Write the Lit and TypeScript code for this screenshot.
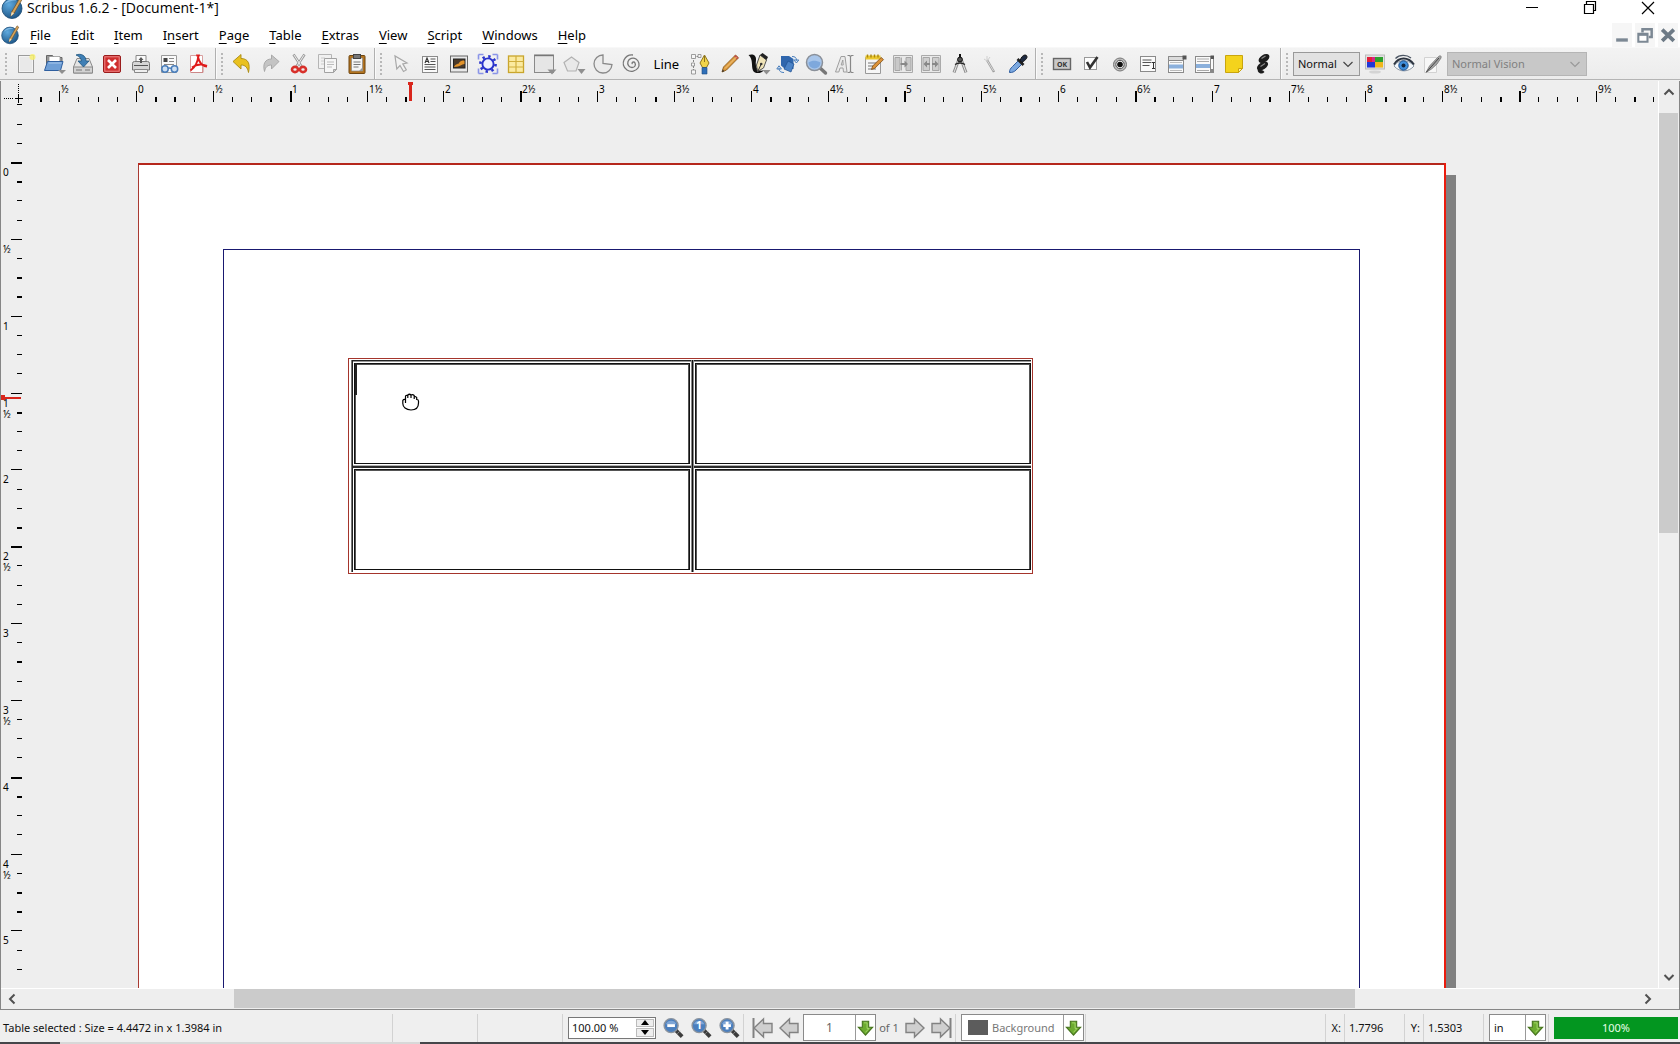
import { LitElement, html, svg, css, nothing, SVGTemplateResult, TemplateResult } from "lit";
import { customElement } from "lit/decorators.js";

const DROP = svg`<path d="M15 18h8l-4 4z" fill="#8f8f8f"/>`;

const ICONS: Record<string, SVGTemplateResult> = {
  logo: svg`<circle cx="12" cy="12.500" r="10" fill="url(#g-logo)" stroke="#16466f" stroke-width=".8"/>
    <path d="M4.500 8c3-5 9-6 12-3.500-4-.5-8 1-12 3.500z" fill="#8fc3ea" opacity=".8"/>
    <path d="M20.500 1l2 1.600L14 17.500l-3.200 2.800.8-4.200z" fill="#d6a45c" stroke="#6b4a20" stroke-width=".7"/>
    <path d="M11.600 16.100l2.400 1.400-3.200 2.800z" fill="#f3e3c0"/>`,
  new: svg`<rect x="4.500" y="3.500" width="15" height="17" fill="#f3f3f3" stroke="#9b9b9b"/>
    <rect x="6" y="5" width="12" height="14" fill="#e9e9e9"/><circle cx="18.500" cy="5" r="3" fill="#f6ef6e" opacity=".85"/>`,
  open: svg`<path d="M3.500 18V3.500h6l1.500 2h8V9" fill="#9a9a9a" stroke="#666"/><path d="M6 4.500h11v6H6z" fill="#fff" stroke="#888" stroke-width=".7"/>
    <path d="M1.500 18.500L4.500 9.500h15.500l-2.500 9z" fill="#6f9fd6" stroke="#2f5f9f"/><path d="M5.500 11h13" stroke="#a9c8ec"/>${DROP}`,
  save: svg`<path d="M2.500 15L6 6.500h12l3.500 8.500v6h-19z" fill="#e4e4e4" stroke="#8a8a8a"/><path d="M2.500 15h19v6h-19z" fill="#d2d2d2" stroke="#8a8a8a"/>
    <path d="M14 18h5M5 18h6" stroke="#777"/><path d="M5 3c5-2 10 .5 10 6h3l-5.500 6L7 9h3.500C10 6 8 4 5 3z" fill="#3f7fb5" stroke="#1f567f" stroke-width=".8"/>`,
  close: svg`<rect x="3.500" y="3.500" width="17" height="17" rx="1.500" fill="#cf2f2f" stroke="#9a1c1c"/><rect x="4.800" y="4.800" width="14.400" height="14.400" fill="none" stroke="#e88"/>
    <path d="M8 8l8 8M16 8l-8 8" stroke="#fff" stroke-width="2.600"/>`,
  print: svg`<path d="M7 3.500h10V12H7z" fill="#fafafa" stroke="#888"/><path d="M3.500 11.500q0-2 2-2h13q2 0 2 2V18h-17z" fill="#d6d6d6" stroke="#777"/>
    <path d="M12 5l2.500 3h-1.500v3h-2V8H9.500z" fill="#555"/><path d="M5 13.500h14" stroke="#555"/><path d="M5.500 17.500h13v3h-13z" fill="#efefef" stroke="#888"/>`,
  preflight: svg`<path d="M4.500 3.500h15v17h-15z" fill="#fafafa" stroke="#9a9a9a"/><path d="M6.500 6h4v4h-4z" fill="#444"/><path d="M12 6.500h5M12 9.500h5M7 12.500h10" stroke="#888"/>
    <circle cx="8" cy="17" r="3.200" fill="#cfe0f2" stroke="#4a7ebb" stroke-width="1.500"/><circle cx="17.500" cy="17" r="3.200" fill="#cfe0f2" stroke="#4a7ebb" stroke-width="1.500"/><path d="M11 16.500q1.700-1 3.300 0" fill="none" stroke="#4a7ebb" stroke-width="1.300"/>`,
  pdf: svg`<path d="M4.500 3.500h12v17h-12z" fill="#fff" stroke="#d9a0a0"/><path d="M10 2.500h4l-.5 2h-3z" fill="#d22"/>
    <path d="M12.500 3c-.5 6-3 12-8 15.500M12 5c1 5 4 9 9 9.500M6 15.500c4-3 9-4 15-1.500" fill="none" stroke="#e01b1b" stroke-width="2"/><path d="M5 20.500h12v-6" fill="none" stroke="#c88"/>`,
  undo: svg`<path d="M3 9.500L11 2.500v4c7 0 9.500 5 7.500 14-1-5-3-7.500-7.500-7.500v4z" fill="#e9c11f" stroke="#a98a10" stroke-width=".9"/>`,
  redo: svg`<path d="M20 9.500L12.500 3v4C6 7 3.500 12 5.500 19.500c1-4.500 3-6.500 7-6.500v4z" fill="#c4c4c4" stroke="#a4a4a4" stroke-width=".9"/>`,
  cut: svg`<path d="M6.500 2.500l8 12M17.500 2.500l-8 12" stroke="#9a9a9a" stroke-width="2.600"/><path d="M7 3l7 11M17 3l-7 11" stroke="#eee" stroke-width="1"/>
    <ellipse cx="8" cy="17.500" rx="3" ry="2.600" fill="none" stroke="#d8302a" stroke-width="2.600"/><ellipse cx="16" cy="17.500" rx="3" ry="2.600" fill="none" stroke="#d8302a" stroke-width="2.600"/>`,
  copy: svg`<path d="M2.500 2.500h13v14h-13z" fill="#f1f1f1" stroke="#b5b5b5"/><path d="M5 6h4M5 9h3M5 12h3" stroke="#ccc"/><path d="M8.500 6.500h12v11l-3 3h-9z" fill="#f6f6f6" stroke="#a2a2a2"/>
    <path d="M11 10h7M11 12.500h7M11 15h5" stroke="#bcbcbc"/><path d="M17.500 20.500v-3h3z" fill="#ccc" stroke="#a2a2a2"/>`,
  paste: svg`<rect x="4" y="3.500" width="16" height="18" rx="1" fill="#b37420" stroke="#6e450f"/><path d="M6.500 6h11v13h-11z" fill="#f5f5f5" stroke="#888" stroke-width=".7"/>
    <rect x="8.500" y="2.500" width="7" height="4" fill="#777" stroke="#444"/><path d="M8.500 10h7M8.500 12.500h7M8.500 15h5" stroke="#777"/><path d="M14 19l3.500-3.500V19z" fill="#999"/>`,
  select: svg`<path d="M6 4l1.800 13 3.200-3.500 3.500 6 2.800-1.600-3.500-6 4.200-.9z" fill="#f2f2f2" stroke="#a8a8a8" stroke-width="1.200"/>`,
  textframe: svg`<rect x="4.500" y="4.500" width="15" height="16" fill="#fafafa" stroke="#8b8b8b"/><path d="M7 11l2-5 2 5M7.800 9.500h2.600" fill="none" stroke="#333" stroke-width="1.100"/>
    <path d="M12.500 7h5M12.500 9.500h5M6.500 12.500h11M6.500 15h11M6.500 17.500h11" stroke="#555"/>`,
  imageframe: svg`<rect x="3.500" y="4" width="17" height="16" fill="#e8e8e8" stroke="#666"/><rect x="6.500" y="7" width="11.500" height="9" fill="#4a3a2a" stroke="#222"/><path d="M7 15c2-4 4-2 5-4s4-3 5.500-2v3c-3 0-4 3-10.500 3z" fill="#e2932a"/>`,
  render: svg`<path d="M2.500 2.500h5M16.500 2.500h5M2.500 21.500h5M16.500 21.500h5M2.500 2.500v5M2.500 16.500v5M21.500 2.500v5M21.500 16.500v5" stroke="#8a94e8" stroke-width="1.600"/>
    <circle cx="12" cy="12" r="5.600" fill="#eef0ff" stroke="#2a33cc" stroke-width="1.900"/><circle cx="12" cy="12" r="7.600" fill="none" stroke="#2a33cc" stroke-width="2.600" stroke-dasharray="2.400 3.569"/>`,
  table: svg`<rect x="4.500" y="4" width="15" height="16.500" fill="#fbeaa0" stroke="#c9a52c" stroke-width="1.300"/><path d="M12 4v16.500M4.500 9.500h15M4.500 15h15" stroke="#d0ae3c" stroke-width="1.200"/>`,
  shape: svg`<rect x="1.500" y="3" width="19" height="17.500" fill="#e6e6e6" stroke="#8a8a8a"/><path d="M1.500 3.500h19" stroke="#777" stroke-width="1.400"/><path d="M14.500 17.500h9l-4.500 5z" fill="#8f8f8f"/>`,
  polygon: svg`<path d="M9.500 5l7.500 5.500-3 8.500H5.500L2 10.500z" fill="#e9e9e9" stroke="#b2b2b2" stroke-width="1.200"/><path d="M15.500 17h8l-4 5z" fill="#8f8f8f"/>`,
  arc: svg`<path d="M12 12V3.500a9 9 0 1 0 9 9.500z" fill="#ececec" stroke="#8a8a8a" stroke-width="1.300" transform="translate(0 -.5)"/>`,
  spiral: svg`<path d="M12.500 12c-1.500-1.500 1.500-3 2.500-1s0 4.500-3 4.500-5-3-4-6 5-4.500 8-2.500 4 6 2 9-7 4.500-11 2-4.500-7-3-10 4.500-5.500 9-5" fill="none" stroke="#777" stroke-width="1.300"/>`,
  bezier: svg`<path d="M4.500 5v15M4.500 4.500h7" stroke="#888" stroke-dasharray="2 1"/><path d="M2.500 2.500h4v4h-4zM9 2.500h3v3H9zM2.500 11h3v3h-3zM2.500 18h4v4h-4z" fill="#f6f6f6" stroke="#888" stroke-width=".8"/>
    <path d="M15.500 3l4.500 8-2.500 4.500h-4L11 11z" fill="#f0d44a" stroke="#8d7420"/><path d="M15.500 4v6" stroke="#8d7420"/><path d="M13 15.500h5V22h-5z" fill="#2f6fb8" stroke="#1c4a82" stroke-width=".6"/>`,
  pencil: svg`<path d="M4 20l1.500-5L17.500 3l3 2.800L8.500 18z" fill="#dc9a3e" stroke="#8a5a1c" stroke-width=".9"/><path d="M16 4.500l1.500-1.500 3 2.800-1.500 1.700z" fill="#c0504d"/><path d="M7 16.500L18.500 5" stroke="#f3c983" stroke-width="1"/><path d="M4 20l.8-2.500 1.600 1.700z" fill="#333"/>`,
  calligraphy: svg`<path d="M1.500 3c4-1.500 8 0 7.500 5-.5 4-.5 7 2 9.500 1.500 1.500 4 1.500 6 .5-2 3.500-9 4.500-11 .5-2-4 .5-11-4.500-15.500z" fill="#111"/><path d="M13 3l6.500 5-3 8-6 3.500L9.500 13z" fill="#efe3b8" stroke="#555"/><path d="M13 3l6.500 5 1.500-3L15.500 1z" fill="#222"/><path d="M11 19l3-6.500" stroke="#333"/><circle cx="14.200" cy="12" r="1.300" fill="#333"/><path d="M15.500 18h8l-4 4.500z" fill="#8f8f8f"/>`,
  rotate: svg`<path d="M5 4h8l4.500 3v10H9L5 13.500z" fill="#2f66ad"/><path d="M12 9l6 3-3 8-7-3z" fill="#4b83c7" stroke="#1e4f8f" stroke-width=".7"/>
    <path d="M16 4.500c3 0 4.500 1 4.500 4M22.800 8l-2.400 3-2.500-3z" fill="#e3edf8" stroke="#4a7ebb"/><path d="M8 20.500c-3 0-5-1-5-4.500M.8 17L3 13.800 5.400 17z" fill="#e3edf8" stroke="#4a7ebb"/>`,
  zoom: svg`<path d="M15.500 15.500l6 5.500" stroke="#777" stroke-width="3.400" stroke-linecap="round"/><circle cx="10.500" cy="10.500" r="8" fill="#a9c6ea" stroke="#8a9099" stroke-width="1.500"/><path d="M4.500 10.500c4-2.500 8-2 12 0a6 6 0 0 1-12 0z" fill="#7ea8dc"/>`,
  editcontents: svg`<path d="M2.500 20L8 4.500h4l2 15.500h-3.500l-.5-4H7l-1.200 4zM8.200 13h2L9.800 8z" fill="#e9e9e9" stroke="#9f9f9f"/><path d="M17.500 4v16M14.500 3.500h2l1 1 1-1h2M14.500 20.500h2l1-1 1 1h2" fill="none" stroke="#888" stroke-width="1.200"/>`,
  story: svg`<path d="M3.500 5.500h15v16h-15z" fill="#f6f6f6" stroke="#999"/><path d="M3.500 3.500h15v4h-15z" fill="#ecc92e"/><path d="M5.500 2.500v3M9 2.500v3M12.500 2.500v3M16 2.500v3" stroke="#a88610" stroke-width="1.400"/>
    <path d="M6 11h9M6 14h7M6 17h8" stroke="#777"/><path d="M9.500 17.500l1.200-3.500 8.500-8.500 2.300 2.100-8.700 8.700z" fill="#dc9238" stroke="#7c4d14" stroke-width=".8"/>`,
  link: svg`<path d="M2.500 3.500h19v17h-19z" fill="#e9e9e9" stroke="#aaa"/><path d="M4 5.500h5v13H4zM15 5.500h5v13h-5z" fill="#c9c9c9" stroke="#a6a6a6"/><path d="M10.500 5.500v13" stroke="#aaa"/><path d="M9.500 11h4V8.500L17 12l-3.500 3.500V13h-4z" fill="#888"/>`,
  unlink: svg`<path d="M2.500 3.500h19v17h-19z" fill="#e9e9e9" stroke="#aaa"/><path d="M4 5.500h6.500v13H4zM13.500 5.500H20v13h-6.500z" fill="#cecece" stroke="#a6a6a6"/><path d="M11 11H8V8.500L4.500 12 8 15.500V13h3zM13 11h3V8.500l3.500 3.500-3.500 3.500V13h-3z" fill="#888"/>`,
  measure: svg`<path d="M11 7L6 20.500M13 7l5 13.500" stroke="#8d8d8d" stroke-width="3"/><path d="M11 7L6 20.500M13 7l5 13.500" stroke="#e4e4e4" stroke-width="1"/><path d="M12 2v4" stroke="#111" stroke-width="2"/><circle cx="12" cy="7.500" r="2.400" fill="#555" stroke="#111"/><path d="M7 12.500q5-3 10 0" fill="none" stroke="#222" stroke-width="1.300"/>`,
  copyprops: svg`<path d="M10 8l7 12" stroke="#9d9d9d" stroke-width="2.400"/><path d="M10.500 9l6 10" stroke="#e8e8e8" stroke-width=".8"/><path d="M10 4v5M7 7l3 2M13 5l-2.500 3.500" stroke="#cfcfcf"/>`,
  dropper: svg`<path d="M3.500 20.500c0-3 1-4 3-6l6-6 3.500 3.500-6 6c-2 2-3.500 2.500-6.500 2.500z" fill="#7ba8e0" stroke="#2e5c9e"/><path d="M11.500 7l6 6" stroke="#222" stroke-width="2.600"/><path d="M14 8.500c1-3 3-5.500 5-5.500s2.500 2 1.500 3.500-2.500 2.500-4.500 4z" fill="#1d2a40" stroke="#111"/>`,
  ok: svg`<rect x="3.500" y="6.500" width="17" height="11" fill="#c9c9c9" stroke="#666" stroke-width="1.400"/><text x="12" y="14.500" text-anchor="middle" font-size="7" font-weight="700" fill="#333">OK</text>`,
  check: svg`<rect x="5.500" y="5.500" width="12" height="12" fill="#fdfdfd" stroke="#999"/><path d="M8 10l3 5.500L18.500 5" fill="none" stroke="#333" stroke-width="2.600"/>`,
  radio: svg`<circle cx="12" cy="12.500" r="6.500" fill="#bdbdbd" stroke="#777"/><circle cx="12" cy="12.500" r="4.200" fill="#f0f0f0" stroke="#555"/><circle cx="12" cy="12.500" r="2.800" fill="#111"/>`,
  textfield: svg`<rect x="4.500" y="4.500" width="15" height="15" fill="#fafafa" stroke="#8a8a8a"/><path d="M6.500 8h9M6.500 10.500h9M6.500 13.500h7" stroke="#555"/><path d="M17.500 10.500v6M16 10.500h3M16 16.500h3" stroke="#333"/>`,
  combobox: svg`<rect x="3.500" y="4.500" width="15" height="16" fill="#fafafa" stroke="#8a8a8a"/><path d="M3.500 4.500h15v4h-15z" fill="#dcdcdc" stroke="#8a8a8a"/><path d="M4 12.500h14v4H4z" fill="#8bb0dc"/><path d="M5 10.500h12M5 18.500h12" stroke="#bbb"/><rect x="17.500" y="3.500" width="4" height="4" fill="#555"/>`,
  listbox: svg`<rect x="2.500" y="4.500" width="18" height="16" fill="#fafafa" stroke="#8a8a8a"/><path d="M4 7h12M4 9.500h12M4 18.500h12" stroke="#aaa"/><path d="M3 12h14v4H3z" fill="#8bb0dc"/><path d="M17.500 3.500h3.500v3.500h-3.500z" fill="#555"/><path d="M17.500 5v15" stroke="#8a8a8a"/><path d="M17.500 17h3.500v3h-3.500z" fill="#888"/>`,
  note: svg`<path d="M3.500 3.500h17v13l-4 4h-13z" fill="#f4d31c" stroke="#c9a50e"/><path d="M20.500 16.500h-4v4z" fill="#fdf0a0" stroke="#c9a50e"/>`,
  weblink: svg`<ellipse cx="13" cy="6.500" rx="6" ry="3.600" transform="rotate(-32 13 6.500)" fill="#1c1c1c"/><path d="M10.500 6.500l4-2.500" stroke="#8a8a8a" stroke-width="1.200"/>
    <ellipse cx="11.500" cy="14" rx="6.200" ry="3.600" transform="rotate(-32 11.500 14)" fill="#1c1c1c"/><path d="M9.500 14.500l4.500-3" stroke="#8a8a8a" stroke-width="1.200"/><path d="M7 17l5 1.500 1.500 1.500q-2.500 2.500-5 1T7 17z" fill="#1c1c1c"/>`,
  colors: svg`<rect x="2.500" y="3" width="19" height="14" fill="#e2e2e2" stroke="#bbb"/><path d="M4 5h8v5H4z" fill="#d9258a"/><path d="M12 5h8v5h-8z" fill="#2da12d"/><path d="M4 10h8v5.500H4z" fill="#1f37d8"/><path d="M12 10h8v5.500h-8z" fill="#efb71d"/><path d="M4 5h5v5H4z" fill="#e2203a"/><ellipse cx="12" cy="20" rx="6" ry="1.600" fill="#d4d4d4"/>`,
  eye: svg`<path d="M2 14c4-6 13-8 20 0-5 6-14 7-20 0z" fill="#f5f8fb" stroke="#8a97a5"/><path d="M2 12.500c5-8 14-8 20 0" fill="none" stroke="#2c3440" stroke-width="2"/><path d="M3.500 6.500c4-4 11-4 15.500-.5" fill="none" stroke="#4b5563" stroke-width="1.300"/><circle cx="11.500" cy="13.500" r="4.700" fill="#3f8fdd" stroke="#1f4f8a"/><circle cx="11.500" cy="13.500" r="2" fill="#0f2440"/>`,
  preview: svg`<path d="M3.500 5.500h12v15h-12z" fill="#f7f7f7" stroke="#d2d2d2"/><path d="M5 20.500L8.500 14l9-9.500c2-1.500 3-.5 2.500 1.500L16 12l-5.500 5z" fill="#a3a3a3" stroke="#777" stroke-width=".8"/><path d="M5.500 20L18 6" stroke="#444"/>`,
};

const magnifier = (mark: SVGTemplateResult) => svg`<path d="M14 14l7 7" stroke="#3c3c3c" stroke-width="4"/><path d="M16 18l3-3" stroke="#8a8a8a"/><circle cx="9.500" cy="9.500" r="7.300" fill="#4b7fbe" stroke="#8c949e" stroke-width="1.500"/><path d="M4 8a6 6 0 0 1 11 0z" fill="#7fa6d6"/>${mark}`;
const ARROW_L = svg`<path d="M3 12l9.500-9v4.500H21v9h-8.500V21z" fill="#cfcfcf" stroke="#828282" stroke-width="1.400"/>`;
const ARROW_R = svg`<path d="M21 12l-9.500-9v4.500H3v9h8.500V21z" fill="#cfcfcf" stroke="#828282" stroke-width="1.400"/>`;
Object.assign(ICONS, {
  zoomout: magnifier(svg`<path d="M5.500 8h8v3h-8z" fill="#fff"/>`),
  zoomone: magnifier(svg`<text x="9.500" y="13.500" text-anchor="middle" font-size="11" font-weight="700" fill="#fff">1</text>`),
  zoomin: magnifier(svg`<path d="M8 5.500h3V8h2.500v3H11v2.500H8V11H5.500V8H8z" fill="#fff"/>`),
  first: svg`<path d="M2.500 2v20" stroke="#828282" stroke-width="2"/>${ARROW_L}`,
  prev: ARROW_L,
  next: ARROW_R,
  last: svg`<path d="M21.500 2v20" stroke="#828282" stroke-width="2"/>${ARROW_R}`,
  green: svg`<path d="M8 3.500h8V11h5l-9 10-9-10h5z" fill="#6cab2f" stroke="#47741f" stroke-width="1.400"/><path d="M10 5.500h4v7h2.500L12 17.500" fill="none" stroke="#a7d86b" stroke-width="1.200"/>`,
  minimize: svg`<path d="M6 11.500h12" stroke="#000"/>`,
  restore: svg`<path d="M6.500 8.500h9v9h-9zM8.500 8v-2.500h9v9h-2" fill="none" stroke="#000" stroke-width="1.200"/>`,
  exit: svg`<path d="M6 6l12 12M18 6L6 18" stroke="#000" stroke-width="1.200"/>`,
  submin: svg`<path d="M5 18h14" stroke="#7c8894" stroke-width="4"/>`,
  subrestore: svg`<path d="M4 10.500h11V20H4z" fill="#fff" stroke="#7c8894" stroke-width="2.500"/><path d="M4 11.500h11" stroke="#7c8894" stroke-width="3"/><path d="M9 9V5h11v9.500h-3.500" fill="none" stroke="#7c8894" stroke-width="3"/>`,
  subclose: svg`<path d="M5 5.500l14 13.500M19 5.500L5 19" stroke="#6d7a86" stroke-width="4.500"/>`,
  up: svg`<path d="M7.500 14.500L12 10l4.500 4.500" fill="none" stroke="#505050" stroke-width="2"/>`,
  down: svg`<path d="M7.500 10L12 14.500l4.500-4.500" fill="none" stroke="#505050" stroke-width="2"/>`,
  left: svg`<path d="M14.500 7.500L10 12l4.500 4.500" fill="none" stroke="#505050" stroke-width="2"/>`,
  right: svg`<path d="M9.500 7.500L14 12l-4.500 4.500" fill="none" stroke="#505050" stroke-width="2"/>`,
  chevron: svg`<path d="M7.500 10L12 14.500l4.500-4.500" fill="none" stroke="currentColor" stroke-width="1.200"/>`,
});

const icon = (name: string) => html`<svg class="icon" viewBox="0 0 24 24" aria-hidden="true">${ICONS[name]}</svg>`;

type Tool = [string, string];
const FILE_TOOLS: Tool[] = [["new", "New"], ["open", "Open"], ["save", "Save"], ["close", "Close"], ["print", "Print"], ["preflight", "Preflight Verifier"], ["pdf", "Save as PDF"]];
const EDIT_TOOLS: Tool[] = [["undo", "Undo"], ["redo", "Redo"], ["cut", "Cut"], ["copy", "Copy"], ["paste", "Paste"]];
const ITEM_TOOLS: Tool[] = [
  ["select", "Select Item"], ["textframe", "Text Frame"], ["imageframe", "Image Frame"], ["render", "Render Frame"], ["table", "Table"],
  ["shape", "Shape"], ["polygon", "Polygon"], ["arc", "Arc"], ["spiral", "Spiral"], ["line", "Line"], ["bezier", "Bezier Curve"],
  ["pencil", "Freehand Line"], ["calligraphy", "Calligraphic Line"], ["rotate", "Rotate Item"], ["zoom", "Zoom"],
  ["editcontents", "Edit Contents"], ["story", "Story Editor"], ["link", "Link Text Frames"], ["unlink", "Unlink Text Frames"],
  ["measure", "Measurements"], ["copyprops", "Copy Item Properties"], ["dropper", "Eye Dropper"],
];
const PDF_TOOLS: Tool[] = [["ok", "PDF Push Button"], ["check", "PDF Check Box"], ["radio", "PDF Radio Button"], ["textfield", "PDF Text Field"], ["combobox", "PDF Combo Box"], ["listbox", "PDF List Box"], ["note", "Text Annotation"], ["weblink", "Link Annotation"]];
const MENUS = [["", "F", "ile"], ["", "E", "dit"], ["", "I", "tem"], ["I", "n", "sert"], ["", "P", "age"], ["", "T", "able"], ["", "E", "xtras"], ["", "V", "iew"], ["", "S", "cript"], ["", "W", "indows"], ["", "H", "elp"]];

const PX_PER_INCH = 153.67;
const EIGHTH = PX_PER_INCH / 8;
const H_ORIGIN = 114;
const V_ORIGIN = 60;
const H_BOLD = new Set([-5, 1, 2, 7, 8, 14, 20, 21, 27, 33, 34, 39, 40, 46, 52, 53, 59, 65, 66, 71, 72, 78]);
const V_BOLD = new Set([0, 1, 6, 7, 13, 19, 20, 26, 32, 33, 38, 39]);

function label(k: number): [string, string] {
  const halves = Math.abs(k / 4);
  const whole = Math.floor(halves / 2);
  const half = halves % 2 === 1 ? "½" : "";
  return [whole === 0 && half ? "" : String(whole), half];
}

/** Ticks of the top ruler that fit into a strip of the given length. */
function horizontalTicks(length: number) {
  const out: SVGTemplateResult[] = [];
  for (let k = -5; H_ORIGIN + k * EIGHTH < length - 2; k++) {
    const x = Math.round(H_ORIGIN - 1 + k * EIGHTH);
    const major = k % 4 === 0;
    out.push(svg`<rect x=${x} y=${major ? 10 : 16} width=${H_BOLD.has(k) ? 2 : 1} height=${major ? 11 : 5}/>`);
    if (major && x + 24 < length) out.push(svg`<text x=${x + 2} y="12">${label(k).join("")}</text>`);
  }
  return out;
}

/** Ticks of the left ruler that fit into a strip of the given length. */
function verticalTicks(length: number) {
  const out: SVGTemplateResult[] = [];
  for (let k = -3; V_ORIGIN + k * EIGHTH < length - 2; k++) {
    const y = Math.round(V_ORIGIN - 1 + k * EIGHTH);
    const major = k % 4 === 0;
    out.push(svg`<rect x=${major ? 10 : 16} y=${y} width=${major ? 11 : 5} height=${V_BOLD.has(k) ? 2 : 1}/>`);
    if (major && y + 28 < length) {
      label(k).filter(Boolean).forEach((part, i) => out.push(svg`<text x="2" y=${y + 14 + i * 11}>${part}</text>`));
    }
  }
  return out;
}

const cell = (x: number, y: number) => svg`
  <rect x=${x} y=${y} width="336" height="101" fill="#111"/>
  <rect x=${x + 1} y=${y + 1} width="334" height="99" fill="#555"/>
  <rect x=${x + 2} y=${y + 2} width="332" height="98" fill="#fff"/>`;

@customElement("app-root")
export class AppRoot extends LitElement {
  static styles = css`
    :host {
      display: flex;
      flex-direction: column;
      height: 100vh;
      overflow: hidden;
      background: #efefef;
      color: #111;
      font: 11px/16px "Noto Sans", "Open Sans", sans-serif;
    }
    * { box-sizing: border-box; }
    button, select, input { font: inherit; color: inherit; margin: 0; padding: 0; border: 0; background: none; border-radius: 0; }
    .defs { position: absolute; width: 0; height: 0; }
    .icon { display: block; width: 24px; height: 24px; flex: none; }
    .titlebar { display: flex; align-items: center; flex: none; height: 23px; padding: 0 3px 7px 0; background: #fff; }
    .titlebar h1 { flex: 1; margin: 0 0 0 3px; font: 14px/16px "Open Sans", sans-serif; color: #000; }
    .win { display: flex; justify-content: center; width: 58px; }
    .menubar { display: flex; align-items: center; flex: none; height: 24px; padding-right: 1px; background: #fff; }
    .menubar nav { display: flex; flex: 1; }
    .menubar nav button { padding: 0 10px; font: 13px/20px "Noto Sans", sans-serif; color: #000; }
    .menubar u { text-underline-offset: 3px; text-decoration-thickness: 1px; }
    .brand { width: 20px; height: 24px; overflow: hidden; }
    .brand .icon { width: 20px; }
    .sub { display: flex; justify-content: center; width: 23px; background: #fff; }
    .sub .icon { background: #f6f6f6; width: 20px; }
    .tools { display: flex; flex: none; height: 33px; margin-bottom: 1px; border-top: 1px solid #f8f8f8; border-bottom: 1px solid #b4b4b4; background: linear-gradient(#f3f3f3, #ececec); }
    .group { display: flex; align-items: center; flex: none; padding: 0 3px 0 12px; border-right: 1px solid #b0b0b0; box-shadow: 1px 0 0 #fafafa; position: relative; }
    .group::before { content: ""; position: absolute; left: 5px; top: 5px; bottom: 4px; width: 2px; background: repeating-linear-gradient(#b8b8b8 0 2px, transparent 2px 4px); }
    .group.file { width: 216px; }
    .group.edit { width: 159px; }
    .group.item { width: 661px; }
    .group.pdf { width: 245px; }
    .group.view { flex: 1; border-right: 0; }
    .tool { display: flex; justify-content: center; flex: 1 1 0; min-width: 0; }
    .tool.text { flex: 0 0 41px; font-size: 13px; line-height: 20px; color: #000; }
    .view .tool { flex: 0 0 29px; }
    .pick { display: flex; align-items: center; position: relative; height: 24px; border: 1px solid #999; background: #e2e2e2; }
    .pick select { appearance: none; flex: 1; min-width: 0; height: 100%; padding-left: 4px; opacity: 1; }
    .pick .icon { position: absolute; right: -1px; pointer-events: none; color: #444; }
    .pick.mode { width: 67px; }
    .pick.vision { width: 140px; background: #c8c8c8; border-color: #b5b5b5; color: #808080; }
    .pick.vision .icon { color: #999; }
    .workspace { flex: 1; min-height: 0; display: grid; grid-template: 22px minmax(0, 1fr) 21px / 22px minmax(0, 1fr) 21px; border: 1px solid #868686; border-top: 0; background: #eee; }
    .workspace svg { display: block; width: 100%; height: 100%; overflow: hidden; }
    .rule { font-size: 10px; fill: #000; shape-rendering: crispEdges; }
    .canvas { background: #eee; overflow: hidden; }
    .canvas svg { shape-rendering: crispEdges; }
    .vbar { grid-column: 3; grid-row: 1 / 3; display: flex; flex-direction: column; border-left: 1px solid #fff; }
    .hbar { grid-column: 1 / 4; grid-row: 3; display: flex; border-top: 1px solid #fff; padding-right: 20px; }
    .hbar button, .vbar button { display: flex; align-items: center; justify-content: center; flex: none; overflow: hidden; }
    .hbar button { width: 22px; height: 19px; }
    .vbar button { width: 19px; height: 22px; }
    .workspace button svg { width: 24px; height: 24px; flex: none; }
    .track { flex: 1; display: flex; min-height: 0; }
    .vbar .track { flex-direction: column; padding-top: 10px; }
    .thumb { background: #cbcbcb; }
    .vbar .thumb { height: 49.200%; margin-right: 1px; }
    .hbar .thumb { width: 69.400%; margin-left: 13.100%; height: 19px; }
    .status { display: flex; align-items: center; flex: none; height: 32px; padding: 3px 2px 0 0; }
    .message { flex: none; width: 392px; padding-left: 3px; }
    .sep { flex: none; width: 1px; height: 28px; background: #d2d2d2; }
    .blank { width: 84px; }
    .spacer { flex: 1; }
    .spin { display: flex; width: 88px; height: 22px; margin: 0 3px 0 5px; padding: 1px; border: 1px solid #777; background: #fff; }
    .spin input { flex: 1; min-width: 0; padding-left: 2px; }
    .steps { display: flex; flex-direction: column; width: 18px; gap: 1px; }
    .steps button { flex: 1; display: flex; align-items: center; justify-content: center; min-height: 0; border: 1px solid #bbb; background: #eee; }
    .steps svg { display: block; width: 8px; height: 5px; }
    .zoombtn, .navbtn { display: flex; justify-content: center; flex: none; width: 28px; }
    .zoombtn .icon { width: 23px; }
    .navbtn { width: 26px; }
    .nav { display: flex; align-items: center; padding: 0 1px 0 6px; }
    .combo { display: flex; align-items: center; flex: none; height: 27px; border: 1px solid #8a8a8a; background: #fff; position: relative; }
    .combo select { appearance: none; flex: 1; min-width: 0; height: 100%; padding: 0 21px 0 4px; }
    .combo .drop { position: absolute; right: 0; top: 0; bottom: 0; width: 20px; display: flex; align-items: center; justify-content: center; border-left: 1px solid #999; pointer-events: none; }
    .combo .drop .icon { width: 19px; }
    .combo.page { width: 73px; margin-left: 1px; color: #666; }
    .combo.page select { text-align-last: center; font-size: 12px; padding: 0 20px 0 0; }
    .combo.layer { width: 123px; margin: 0 1px 0 5px; color: #777; }
    .combo.unit { width: 57px; margin: 0 2px 0 5px; }
    .swatch { width: 20px; height: 15px; margin-left: 6px; background: #5c5c5c; }
    .of { width: 26px; text-align: center; color: #666; }
    .axis { width: 18px; text-align: right; padding-right: 3px; }
    .value { width: 59px; padding-left: 4px; }
    .progress { width: 124px; height: 22px; margin-left: 5px; background: #ddd; }
    .fill { height: 100%; background: #039620; color: #e8ffe8; text-align: center; line-height: 22px; }
    .edge { flex: none; height: 2px; display: flex; background: #45464a; }
    .edge span { width: 360px; margin-left: 60px; background: #d8d8d8; }
  `;

  private onResize = () => this.requestUpdate();

  connectedCallback() {
    super.connectedCallback();
    window.addEventListener("resize", this.onResize);
  }

  disconnectedCallback() {
    window.removeEventListener("resize", this.onResize);
    super.disconnectedCallback();
  }

  private tools(items: Tool[]): TemplateResult[] {
    return items.map(([id, name]) =>
      id === "line"
        ? html`<button class="tool text">Line</button>`
        : html`<button class="tool" aria-label=${name}>${icon(id)}</button>`);
  }

  private drop() {
    return html`<span class="drop">${icon("green")}</span>`;
  }

  private canvas() {
    return html`<svg role="img" aria-label="Page with table">
      <g transform="translate(115 60)">
        <rect x="1308" y="12" width="10" height="1690" fill="#808080"/>
        <rect x="0" y="0" width="1308" height="1692" fill="#fff"/>
        <rect x="0" y="0" width="1" height="1692" fill="#a93a32"/>
        <rect x="0" y="0" width="1308" height="2" fill="#b5271c"/>
        <rect x="1306" y="0" width="2" height="1692" fill="#ea1c0d"/>
        <rect x="85.500" y="86.500" width="1136" height="1500" fill="none" stroke="#191970"/>
        <g transform="translate(210 195)">
          <rect x=".5" y=".5" width="684" height="215" fill="none" stroke="#a5352c"/>
          <path d="M3 2h680v1H3z" fill="#222"/><path d="M3 3h680v1H3z" fill="#9a9a9a"/>
          <path d="M3 107h680v1H3z" fill="#b0b0b0"/><path d="M3 108h680v2H3z" fill="#2a2a2a"/>
          ${[[6, 5], [347, 5], [6, 111], [347, 111]].map(([x, y]) => cell(x, y))}
          <path d="M3 2h1v212H3z" fill="#777"/><path d="M4 2h1v212H4z" fill="#222"/>
          <path d="M343 2h3v212h-3z" fill="#888"/><path d="M344 2h1v212h-1z" fill="#111"/>
          <rect x="7" y="5" width="2" height="32" fill="#222"/>
          <g transform="translate(54 35)" shape-rendering="geometricPrecision">
            <path d="M3.500 10V3.500q0-1.500 2.300-1V5V2q1.700-1.500 3.200 0V5V2q1.700-1 3.200.5V6V4q2-.8 2.500.5V6.500q1.800 0 1.800 1.500v2c0 4-2.500 7-7.500 7S.8 14 .8 10.500V7.500Q1.500 6 3.500 6.500" fill="#fff" stroke="#000" stroke-width="1.200"/>
          </g>
        </g>
      </g>
    </svg>`;
  }

  render() {
    return html`
      <svg class="defs" aria-hidden="true"><defs><radialGradient id="g-logo" cx=".35" cy=".3" r=".8"><stop offset="0" stop-color="#5fa9de"/><stop offset="1" stop-color="#174f80"/></radialGradient></defs></svg>
      <header class="titlebar">
        ${icon("logo")}
        <h1>Scribus 1.6.2 - [Document-1*]</h1>
        <button class="win" aria-label="Minimize">${icon("minimize")}</button>
        <button class="win" aria-label="Restore">${icon("restore")}</button>
        <button class="win" aria-label="Close">${icon("exit")}</button>
      </header>
      <div class="menubar">
        <span class="brand">${icon("logo")}</span>
        <nav aria-label="Main menu">${MENUS.map(([a, u, b]) => html`<button>${a || nothing}<u>${u}</u>${b}</button>`)}</nav>
        <button class="sub" aria-label="Minimize document">${icon("submin")}</button>
        <button class="sub" aria-label="Restore document">${icon("subrestore")}</button>
        <button class="sub" aria-label="Close document">${icon("subclose")}</button>
      </div>
      <div class="tools">
        <div class="group file">${this.tools(FILE_TOOLS)}</div>
        <div class="group edit">${this.tools(EDIT_TOOLS)}</div>
        <div class="group item">${this.tools(ITEM_TOOLS)}</div>
        <div class="group pdf">${this.tools(PDF_TOOLS)}</div>
        <div class="group view">
          <label class="pick mode"><select aria-label="Preview quality"><option>Normal</option></select>${icon("chevron")}</label>
          ${this.tools([["colors", "Color Management"], ["eye", "Preview Mode"], ["preview", "Edit in Preview Mode"]])}
          <label class="pick vision"><select aria-label="Vision" disabled><option>Normal Vision</option></select>${icon("chevron")}</label>
        </div>
      </div>
      <main class="workspace">
        <svg class="rule"><path d="M17.500 3v10M3 17.500h10" stroke="#000" stroke-dasharray="1 1"/><path d="M17.500 13v9M14 17.500h8" stroke="#000"/></svg>
        <svg class="rule">${horizontalTicks(window.innerWidth - 45)}<path d="M386 1h3v19h-3zM385 1h5v3h-5z" fill="#d9261c"/></svg>
        <svg class="rule">${verticalTicks(window.innerHeight - 159)}<path d="M0 294h20v2H0zM0 292h4v5H0z" fill="#d9261c"/></svg>
        <div class="canvas">${this.canvas()}</div>
        <div class="vbar">
          <button aria-label="Scroll up">${icon("up")}</button>
          <div class="track"><div class="thumb"></div></div>
          <button aria-label="Scroll down">${icon("down")}</button>
        </div>
        <div class="hbar">
          <button aria-label="Scroll left">${icon("left")}</button>
          <div class="track"><div class="thumb"></div></div>
          <button aria-label="Scroll right">${icon("right")}</button>
        </div>
      </main>
      <footer class="status">
        <span class="message">Table selected : Size = 4.4472 in x 1.3984 in</span>
        <i class="sep"></i><span class="blank"></span><i class="sep"></i><span class="blank"></span><i class="sep"></i>
        <div class="spin">
          <input type="text" aria-label="Zoom" value="100.00 %">
          <span class="steps">
            <button aria-label="Increase zoom"><svg viewBox="0 0 8 5"><path d="M0 5l4-5 4 5z"/></svg></button>
            <button aria-label="Decrease zoom"><svg viewBox="0 0 8 5"><path d="M0 0l4 5 4-5z"/></svg></button>
          </span>
        </div>
        <button class="zoombtn" aria-label="Zoom out">${icon("zoomout")}</button>
        <button class="zoombtn" aria-label="Zoom to 100%">${icon("zoomone")}</button>
        <button class="zoombtn" aria-label="Zoom in">${icon("zoomin")}</button>
        <i class="sep"></i>
        <div class="nav">
          <button class="navbtn" aria-label="First page">${icon("first")}</button>
          <button class="navbtn" aria-label="Previous page">${icon("prev")}</button>
          <label class="combo page"><select aria-label="Page"><option>1</option></select>${this.drop()}</label>
          <span class="of">of 1</span>
          <button class="navbtn" aria-label="Next page">${icon("next")}</button>
          <button class="navbtn" aria-label="Last page">${icon("last")}</button>
        </div>
        <i class="sep"></i>
        <label class="combo layer"><span class="swatch"></span><select aria-label="Layer"><option>Background</option></select>${this.drop()}</label>
        <i class="sep"></i>
        <span class="spacer"></span>
        <i class="sep"></i><span class="axis">X:</span><i class="sep"></i><span class="value">1.7796</span>
        <i class="sep"></i><span class="axis">Y:</span><i class="sep"></i><span class="value">1.5303</span>
        <i class="sep"></i>
        <label class="combo unit"><select aria-label="Unit"><option>in</option></select>${this.drop()}</label>
        <i class="sep"></i>
        <div class="progress" role="progressbar" aria-label="Progress" aria-valuenow="100"><div class="fill">100%</div></div>
      </footer>
      <div class="edge"><span></span></div>
    `;
  }
}
